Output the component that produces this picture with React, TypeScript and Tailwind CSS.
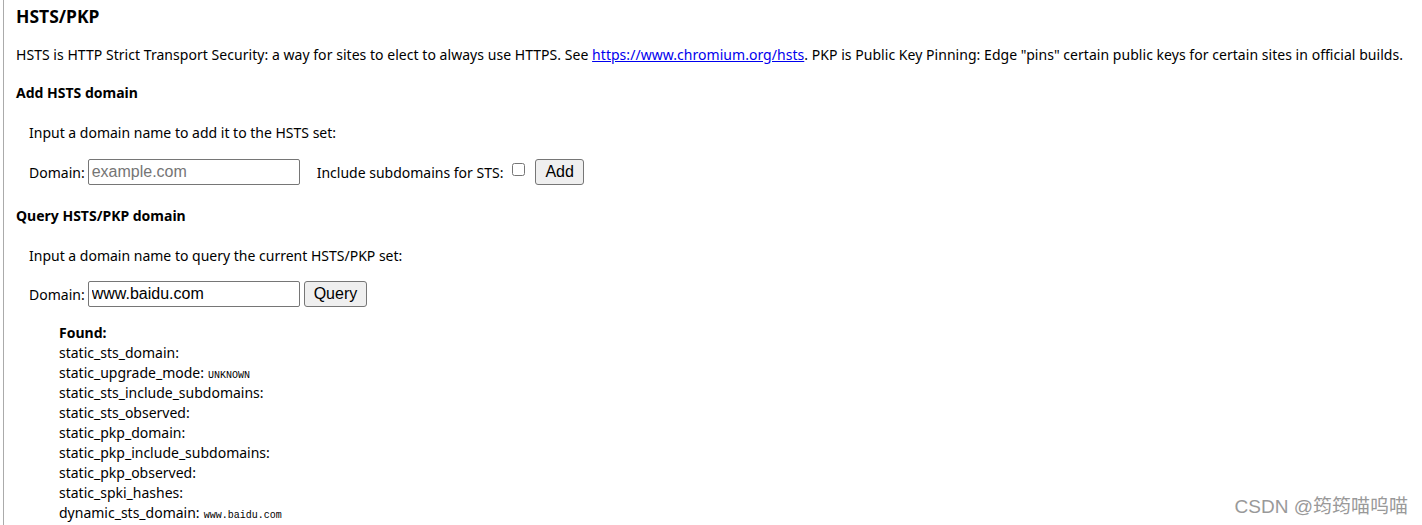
import React from 'react'

const FOUND_FIELDS: [string, string?][] = [
  ['static_sts_domain:'],
  ['static_upgrade_mode:', 'UNKNOWN'],
  ['static_sts_include_subdomains:'],
  ['static_sts_observed:'],
  ['static_pkp_domain:'],
  ['static_pkp_include_subdomains:'],
  ['static_pkp_observed:'],
  ['static_spki_hashes:'],
  ['dynamic_sts_domain:', 'www.baidu.com'],
]

const ui = "font-['Segoe_UI','Noto_Sans',sans-serif]"
const ctl = "font-['Liberation_Sans',Arial,sans-serif] text-[16px]"

function TextBox({ value, placeholder }: { value?: string; placeholder?: string }) {
  return (
    <input
      readOnly
      defaultValue={value}
      placeholder={placeholder}
      className={`${ctl} w-[212px] h-[26px] border border-[#767676] rounded-[2px] px-[3px] text-black placeholder:text-[#757575] bg-white outline-none`}
    />
  )
}

function Btn({ label }: { label: string }) {
  return (
    <button className={`${ctl} h-[26px] px-[9px] border border-[#767676] rounded-[3px] bg-[#efefef] text-black`}>
      {label}
    </button>
  )
}

export default function App() {
  return (
    <div className={`${ui} relative h-[525px] bg-white text-black text-[14px] overflow-hidden`}>
      <div className="absolute left-[3px] top-0 bottom-0 w-px bg-[#ababab]" />
      <div className="pl-[16px] pt-[4px]">
        <h1 className="text-[17.5px] font-bold leading-[24px]">HSTS/PKP</h1>
        <p className="mt-[17px] leading-[20px] whitespace-nowrap tracking-[0.04px]">
          HSTS is HTTP Strict Transport Security: a way for sites to elect to always use HTTPS. See{' '}
          <a href="#" className="text-[#0000ee] underline">https://www.chromium.org/hsts</a>. PKP is Public Key Pinning: Edge "pins" certain public keys for certain sites in official builds.
        </p>

        <h2 className="mt-[18px] font-bold leading-[20px]">Add HSTS domain</h2>
        <div className="pl-[13px]">
          <p className="mt-[20px] leading-[20px]">Input a domain name to add it to the HSTS set:</p>
          <div className="mt-[16px] flex items-center h-[26px]">
            <span className="mr-[3px]">Domain:</span>
            <TextBox placeholder="example.com" />
            <span className="ml-[17px]">Include subdomains for STS:</span>
            <input type="checkbox" className="ml-[9px] mr-[10px] w-[13px] h-[13px] -mt-[6px]" />
            <Btn label="Add" />
          </div>
        </div>

        <h2 className="mt-[21px] font-bold leading-[20px]">Query HSTS/PKP domain</h2>
        <div className="pl-[13px]">
          <p className="mt-[20px] leading-[20px]">Input a domain name to query the current HSTS/PKP set:</p>
          <div className="mt-[15px] flex items-center h-[26px]">
            <span className="mr-[3px]">Domain:</span>
            <TextBox value="www.baidu.com" />
            <span className="ml-[4px]"><Btn label="Query" /></span>
          </div>
          <div className="pl-[30px] mt-[16px]">
            <div className="font-bold h-[20px] leading-[20px]">Found:</div>
            {FOUND_FIELDS.map(([k, v]) => (
              <div key={k} className="h-[20px] leading-[20px] flex items-baseline">
                {k}
                {v && (
                  <span className="ml-[4px] font-['Liberation_Mono',monospace] text-[10px] leading-none">{v}</span>
                )}
              </div>
            ))}
          </div>
        </div>
      </div>
      <div className="absolute right-[14px] bottom-[6px] text-[19px] leading-[24px] text-[#999] font-['Liberation_Sans','Noto_Sans_CJK_SC',sans-serif]">
        CSDN @筠筠喵呜喵
      </div>
    </div>
  )
}
